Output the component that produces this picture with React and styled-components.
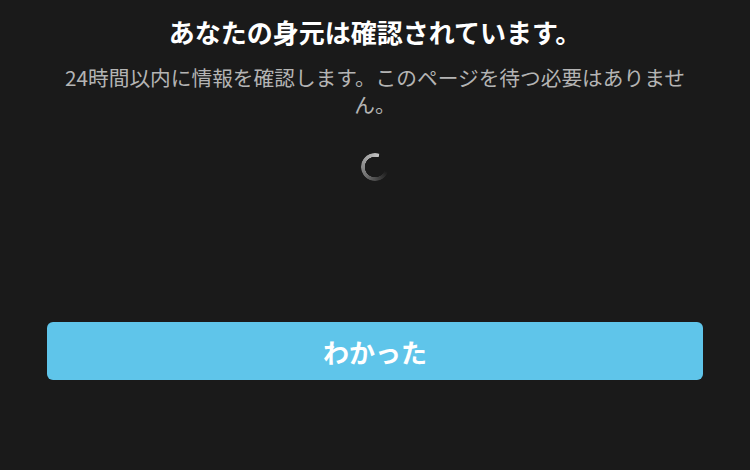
import React from "react";
import styled, { createGlobalStyle, keyframes } from "styled-components";

const GlobalStyle = createGlobalStyle`
  html, body {
    margin: 0;
    padding: 0;
    background: #1a1a1a;
  }
  body {
    font-family: "Noto Sans CJK JP", "Noto Sans", sans-serif;
  }
`;

const spin = keyframes`
  to { transform: rotate(360deg); }
`;

const Screen = styled.div`
  width: 750px;
  height: 470px;
  box-sizing: border-box;
  padding: 15px 46px 0;
  display: flex;
  flex-direction: column;
  align-items: center;
  background: #1a1a1a;
`;

const Title = styled.h1`
  margin: 0;
  font-size: 26px;
  line-height: 34px;
  font-weight: 700;
  color: #ffffff;
  text-align: center;
`;

const Message = styled.p`
  margin: 15px 0 0;
  max-width: 630px;
  font-size: 20.7px;
  line-height: 27px;
  color: #b4b4b4;
  text-align: center;
`;

const SpinnerBox = styled.div`
  margin-top: 35px;
  height: 28px;
  display: flex;
  justify-content: center;
`;

const Spinner = styled.div`
  width: 28px;
  height: 28px;
  border-radius: 50%;
  background: conic-gradient(
    from 110deg,
    rgba(190, 190, 190, 0) 0deg,
    rgba(190, 190, 190, 0.55) 120deg,
    rgba(205, 205, 205, 0.95) 268deg,
    rgba(205, 205, 205, 0) 270deg
  );
  -webkit-mask: radial-gradient(farthest-side, transparent calc(100% - 4px), #000 calc(100% - 3.5px));
  mask: radial-gradient(farthest-side, transparent calc(100% - 4px), #000 calc(100% - 3.5px));
  animation: ${spin} 1s linear infinite;
  animation-play-state: paused;
`;

const Button = styled.button`
  margin-top: 141px;
  width: 656px;
  height: 58px;
  border: none;
  border-radius: 6px;
  background: #5fc5ea;
  color: #ffffff;
  font-family: "Noto Sans CJK JP", "Noto Sans", sans-serif;
  font-size: 26px;
  font-weight: 700;
  cursor: pointer;
`;

export default function App() {
  return (
    <>
      <GlobalStyle />
      <Screen>
        <Title>あなたの身元は確認されています。</Title>
        <Message>
          24時間以内に情報を確認します。このページを待つ必要はありません。
        </Message>
        <SpinnerBox>
          <Spinner />
        </SpinnerBox>
        <Button>わかった</Button>
      </Screen>
    </>
  );
}
